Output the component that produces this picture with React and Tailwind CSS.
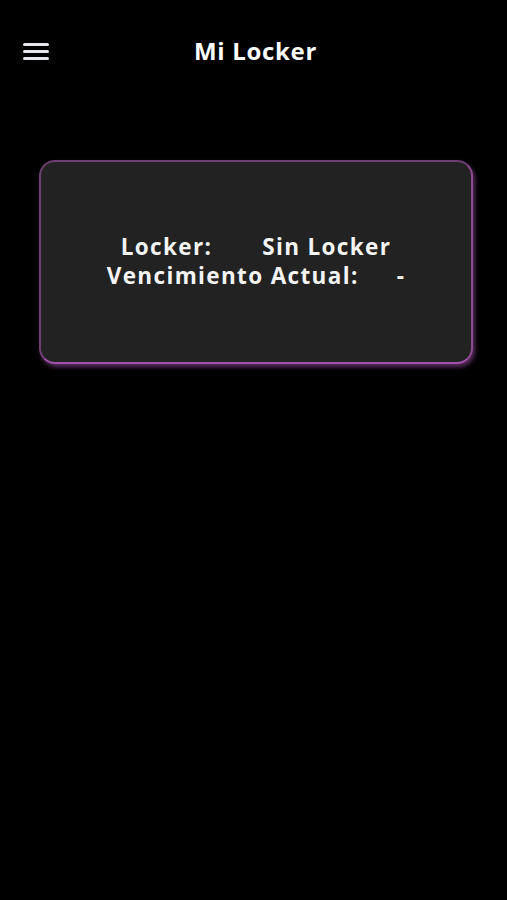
import React from 'react';

const font = { fontFamily: '"Open Sans", "Liberation Sans", sans-serif' };

function MenuIcon() {
  return (
    <div className="flex w-[26px] flex-col gap-[4px]">
      <span className="h-[3px] w-full rounded-sm bg-gray-200" />
      <span className="h-[3px] w-full rounded-sm bg-gray-200" />
      <span className="h-[3px] w-full rounded-sm bg-gray-200" />
    </div>
  );
}

export default function App() {
  return (
    <div className="min-h-[900px] w-full bg-black text-white" style={font}>
      {/* header */}
      <header className="relative flex h-[102px] items-center justify-center pl-[4px]">
        <button className="absolute left-[23px] top-[43px]">
          <MenuIcon />
        </button>
        <h1 className="text-[24px] font-bold tracking-[0.7px]">Mi Locker</h1>
      </header>

      <div className="px-[39px] pt-[58px]">
        <div className="flex h-[204px] w-[434px] flex-col items-center justify-center rounded-[16px] border-2 border-[#6f3f74] border-b-[#a052a6] border-r-[#8a4a8f] bg-[#222222] shadow-[2px_3px_4px_rgba(160,80,170,0.55)]">
          <div className="flex flex-col items-center pb-[3px] text-[22.5px] font-bold leading-[29px] tracking-[1.35px] text-[#f4f4f4]">
            <div className="flex gap-[50px]">
              <span>Locker:</span>
              <span>Sin Locker</span>
            </div>
            <div className="flex gap-[38px]">
              <span>Vencimiento Actual:</span>
              <span>-</span>
            </div>
          </div>
        </div>
      </div>
    </div>
  );
}
